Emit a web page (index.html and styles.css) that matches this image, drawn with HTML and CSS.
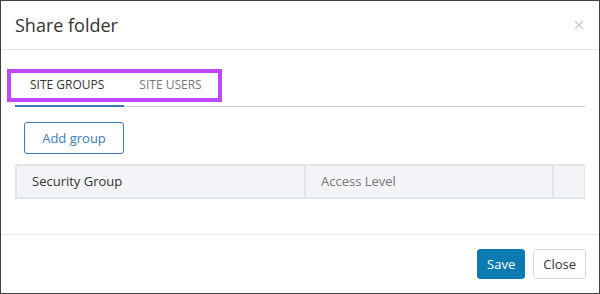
FILE: index.html
```html
<!DOCTYPE html>
<html lang="en">
<head>
    <meta charset="UTF-8">
    <meta name="viewport" content="width=device-width, initial-scale=1.0">
    <title>Share folder</title>
    <link rel="stylesheet" href="styles.css">
</head>
<body>
    <div class="modal">
        <header class="modal-header">
            <h1>Share folder</h1>
            <button class="close-x" aria-label="Close">
                <svg width="10" height="10" viewBox="0 0 10 10">
                    <path d="M1 1 L9 9 M9 1 L1 9" stroke="#c9c9c9" stroke-width="1.4" fill="none"/>
                </svg>
            </button>
        </header>
        <div class="modal-body">
            <div class="tabs">
                <a href="#" class="tab active">SITE GROUPS</a>
                <a href="#" class="tab">SITE USERS</a>
                <div class="highlight"></div>
            </div>
            <button class="btn-outline">Add group</button>
            <div class="grid-table">
                <div class="cell head">Security Group</div>
                <div class="cell muted">Access Level</div>
                <div class="cell"></div>
            </div>
        </div>
        <footer class="modal-footer">
            <button class="btn btn-primary">Save</button>
            <button class="btn btn-default">Close</button>
        </footer>
    </div>
</body>
</html>
```

FILE: styles.css
```css
/* Share folder dialog */
body {
    font-family: "Open Sans", "Noto Sans", Arial, sans-serif;
    margin: 0;
    padding: 0;
    color: #333;
}
.modal {
    width: 600px;
    height: 294px;
    box-sizing: border-box;
    border: 1px solid #404040;
    background-color: #fff;
    display: flex;
    flex-direction: column;
}
.modal-header {
    height: 48px;
    border-bottom: 1px solid #e5e5e5;
    display: flex;
    align-items: center;
    justify-content: space-between;
    padding: 0 15px 0 14px;
}
.modal-header h1 {
    margin: 0;
    font-size: 18px;
    font-weight: normal;
    color: #333;
}
.close-x {
    border: none;
    background: none;
    padding: 0;
    width: 10px;
    height: 10px;
    display: flex;
}
.modal-body {
    flex: 1;
    padding: 15px 14px 0;
}
.tabs {
    position: relative;
    display: flex;
    border-bottom: 1px solid #c6cfd7;
}
.tab {
    font-size: 12px;
    line-height: 18px;
    padding: 11px 20px 11px 15px;
    color: #777;
    text-decoration: none;
    border-bottom: 2px solid transparent;
    margin-bottom: -1px;
}
.tab.active {
    color: #333;
    border-bottom-color: #3a7bbf;
}
.highlight {
    position: absolute;
    left: -8px;
    top: 4px;
    width: 215px;
    height: 33px;
    box-sizing: border-box;
    border: 4px solid #bf48fb;
}
.btn-outline {
    display: block;
    margin: 15px 0 0 9px;
    height: 32px;
    width: 100px;
    font-family: inherit;
    font-size: 13px;
    color: #3a7bbf;
    background-color: #fff;
    border: 1px solid #3a7bbf;
    border-radius: 3px;
    padding: 0;
}
.grid-table {
    margin-top: 10px;
    display: grid;
    grid-template-columns: 287px 246px 1fr;
    gap: 2px;
    padding: 2px;
    background-color: #dfe5ea;
}
.cell {
    height: 31px;
    line-height: 31px;
    padding: 0 15px;
    font-size: 13px;
    background-color: #f2f4f7;
}
.cell.head {
    color: #333;
}
.cell.muted {
    color: #777;
}
.modal-footer {
    border-top: 1px solid #e5e9ed;
    height: 58px;
    display: flex;
    align-items: center;
    justify-content: flex-end;
    gap: 8px;
    padding: 0 13px;
}
.btn {
    height: 30px;
    padding: 0 9px;
    font-family: inherit;
    font-size: 13px;
    border-radius: 3px;
    border: 1px solid #ddd;
}
.btn-primary {
    background-color: #0b7ab0;
    border-color: #0b7ab0;
    color: #fff;
}
.btn-default {
    background-color: #fff;
    color: #333;
}
```
